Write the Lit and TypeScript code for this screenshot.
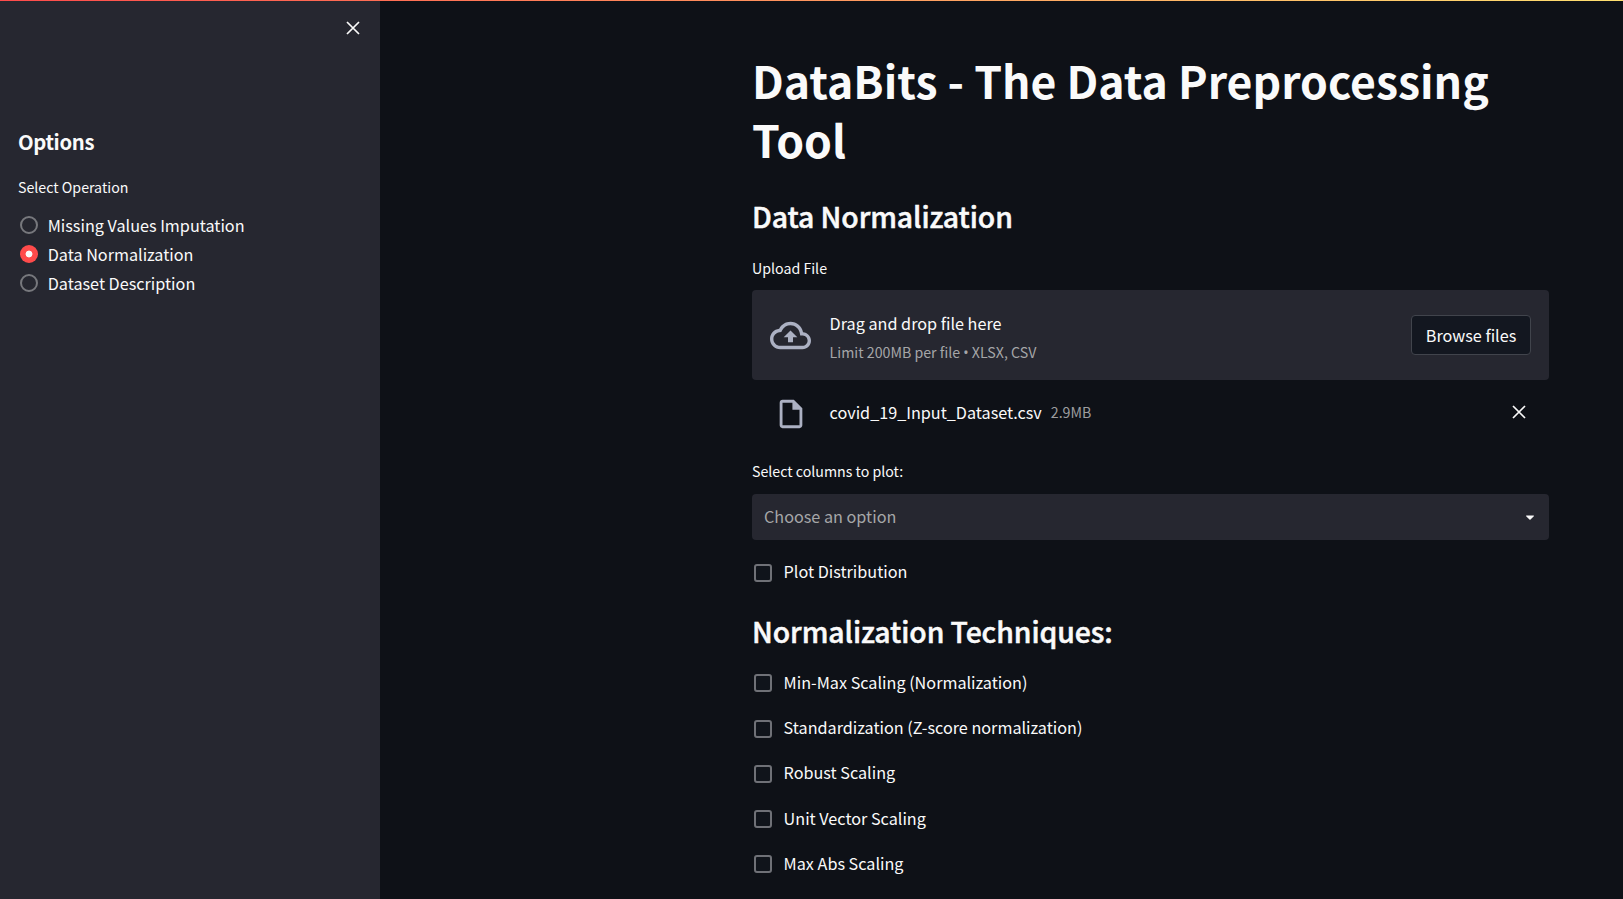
import { LitElement, html, css } from "lit";
import { customElement } from "lit/decorators.js";

const closeIcon = html`<svg class="x" viewBox="0 0 14 14"><path d="M1 1L13 13M13 1L1 13" /></svg>`;

@customElement("app-root")
export class AppRoot extends LitElement {
  static styles = css`
    :host { display: block; height: 899px; overflow: hidden; background: #0e1117; color: #fafafa;
      font-family: "Noto Sans CJK SC", "Noto Sans", sans-serif; font-size: 16.2px; line-height: 29px; }
    * { box-sizing: border-box; }
    h1, h2, h3, p { margin: 0; white-space: nowrap; }
    svg { display: block; flex: none; }
    .bar { height: 1px; background: linear-gradient(90deg, #ff4b4b, #ffe070); }
    .page { display: flex; height: 898px; }
    aside { width: 380px; flex: none; background: #262730; padding: 20px 18px 0; }
    .x { width: 14px; height: 14px; fill: none; stroke: #fafafa; stroke-width: 1.7; }
    .top { display: flex; justify-content: flex-end; height: 107px; padding: 0 2px; }
    h3 { font-size: 20.3px; font-weight: 700; line-height: 27px; margin-bottom: 20px; letter-spacing: -0.35px; }
    .label { font-size: 14.2px; line-height: 24px; }
    .radios { margin-top: 11.5px; }
    .radio { display: flex; align-items: center; height: 29px; gap: 9.7px; padding-left: 2px; }
    .dot { width: 18px; height: 18px; border-radius: 50%; border: 2px solid #77787d; flex: none; }
    .dot.on { border: 0; background: radial-gradient(circle, #fafafa 3px, #ff4b4b 3.8px); }
    main { width: 797px; margin-left: 372px; padding-top: 49px; }
    h1 { font-size: 44.55px; font-weight: 700; line-height: 59.4px; height: 119px; white-space: normal; }
    h2 { font-size: 28.35px; font-weight: 500; line-height: 38px; margin-top: 28px; letter-spacing: -0.06px; -webkit-text-stroke: 0.5px #fafafa; }
    h2.bold { margin-top: 24.5px; }
    .up { margin-top: 21px; }
    .drop { display: flex; align-items: center; height: 90px; margin-top: 10px; padding: 0 18px; border-radius: 4px; background: #262730; }
    .cloud { width: 41px; height: 41px; fill: #acb1c3; margin-right: 18.6px; }
    .grow { flex: 1; }
    .hint { display: grid; gap: 1.5px; padding-top: 3.5px; }
    .bullet { font-family: "Noto Sans", sans-serif; }
    .muted { color: #a5a6a8; }
    .btn { width: 120px; height: 40px; border: 1px solid #41444c; border-radius: 4px; background: #131720; text-align: center; line-height: 38px; }
    .file { display: flex; align-items: center; height: 64px; padding: 0 23px 0 21.6px; }
    .doc { width: 34px; height: 34px; fill: #acb1c3; margin: 4px 22px 0 0; }
    .size { font-size: 14.2px; margin-left: 9px; color: #9c9d9f; }
    .cols { margin-top: 15px; }
    .select { display: flex; align-items: center; justify-content: space-between; height: 46px; margin-top: 11px; padding: 0 10px 1px 12px; border-radius: 4px; background: #262730; }
    .caret { width: 18px; height: 18px; fill: #fafafa; }
    .check { display: flex; align-items: center; gap: 11.6px; height: 29px; padding-left: 2px; }
    .check p { line-height: 27px; margin-bottom: 2px; }
    .box { width: 18px; height: 18px; border: 2px solid #6f7177; border-radius: 3px; background: #10141b; flex: none; }
    .plot { margin-top: 18px; }
    .list { display: grid; gap: 16.25px; margin-top: 19.3px; }
  `;

  private ops = ["Missing Values Imputation", "Data Normalization", "Dataset Description"];
  private techniques = ["Min-Max Scaling (Normalization)", "Standardization (Z-score normalization)", "Robust Scaling", "Unit Vector Scaling", "Max Abs Scaling"];

  render() {
    return html`
      <div class="bar"></div>
      <div class="page">
        <aside>
          <div class="top">${closeIcon}</div>
          <h3>Options</h3>
          <p class="label">Select Operation</p>
          <div class="radios">
            ${this.ops.map((o, i) => html`<div class="radio"><span class="dot ${i === 1 ? "on" : ""}"></span><p>${o}</p></div>`)}
          </div>
        </aside>
        <main>
          <h1>DataBits - The Data Preprocessing Tool</h1>
          <h2>Data Normalization</h2>
          <p class="label up">Upload File</p>
          <div class="drop">
            <svg class="cloud" viewBox="0 0 24 24"><path d="M19.35 10.04C18.67 6.59 15.64 4 12 4 9.11 4 6.6 5.64 5.35 8.04 2.34 8.36 0 10.91 0 14c0 3.31 2.69 6 6 6h13c2.76 0 5-2.24 5-5 0-2.64-2.05-4.78-4.65-4.96zM19 18H6c-2.21 0-4-1.79-4-4 0-2.05 1.53-3.76 3.56-3.97l1.07-.11.5-.95C8.08 7.14 9.94 6 12 6c2.62 0 4.88 1.86 5.39 4.43l.3 1.5 1.53.11c1.56.1 2.78 1.41 2.78 2.96 0 1.65-1.35 3-3 3zM8 13h2.55v3h2.9v-3H16l-4-4z" /></svg>
            <div class="grow hint"><p>Drag and drop file here</p><p class="label muted">Limit 200MB per file <span class="bullet">•</span> XLSX, CSV</p></div>
            <div class="btn">Browse files</div>
          </div>
          <div class="file">
            <svg class="doc" viewBox="0 0 24 24"><path d="M14 2H6c-1.1 0-1.99.9-1.99 2L4 20c0 1.1.89 2 1.99 2H18c1.1 0 2-.9 2-2V8l-6-6zM6 20V4h7v5h5v11H6z" /></svg>
            <p>covid_19_Input_Dataset.csv</p><p class="size grow">2.9MB</p>${closeIcon}
          </div>
          <p class="label cols">Select columns to plot:</p>
          <div class="select">
            <p class="muted">Choose an option</p>
            <svg class="caret" viewBox="0 0 24 24"><path d="M12.7071 15.2929L17.1464 10.8536C17.4614 10.5386 17.2383 10 16.7929 10L7.20711 10C6.76165 10 6.53857 10.5386 6.85355 10.8536L11.2929 15.2929C11.6834 15.6834 12.3166 15.6834 12.7071 15.2929Z" /></svg>
          </div>
          <div class="check plot"><span class="box"></span><p>Plot Distribution</p></div>
          <h2 class="bold">Normalization Techniques:</h2>
          <div class="list">
            ${this.techniques.map((t) => html`<div class="check"><span class="box"></span><p>${t}</p></div>`)}
          </div>
        </main>
      </div>`;
  }
}
